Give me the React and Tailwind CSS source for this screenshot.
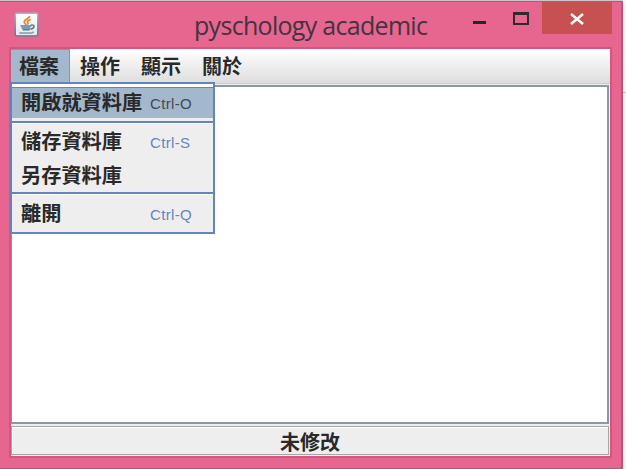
const cjk = "font-['Liberation_Sans','Noto_Sans_CJK_TC',sans-serif]";

function JavaIcon() {
  return (
    <svg className="ml-[14px] mt-[10px] h-[25px] w-[25px] shrink-0" viewBox="0 0 25 26" fill="none">
      <defs>
        <linearGradient id="tile" x1="0" y1="0" x2="0" y2="1">
          <stop offset="0" stopColor="#ffffff" />
          <stop offset="1" stopColor="#e3e9ec" />
        </linearGradient>
        <linearGradient id="rim" x1="0" y1="0" x2="0" y2="1">
          <stop offset="0" stopColor="#a9b5c4" />
          <stop offset="1" stopColor="#557a91" />
        </linearGradient>
      </defs>
      <rect x="0.8" y="1.2" width="23.4" height="23.6" rx="1.5" fill="url(#tile)" stroke="url(#rim)" strokeWidth="1.5" />
      <path d="M15.8 4.2C15.5 7 9.6 7.6 10.2 10.6c.2 1.2 1.5 1.8 1.8 2.8M16.8 7.8c-3.2 1-4 2-3 3.2.8 1 .1 1.7-.4 2.2" stroke="#ea8430" strokeWidth="1.8" />
      <path d="M6.3 14.6h11.2M7.4 16.6h9.2M8.4 18.5h7.5" stroke="#547f9b" strokeWidth="1.7" />
      <path d="M17 13.6c4.6-1 4.4 3.3-.4 4.3" stroke="#547f9b" strokeWidth="1.6" />
      <path d="M5 21.8h13l2-1" stroke="#7d9db1" strokeWidth="1.5" />
    </svg>
  );
}

function MenuItem({ label, shortcut, className = "", shortcutClass = "text-[#6684c5]" }) {
  return (
    <div className={`flex shrink-0 items-center pl-[9px] ${className}`}>
      <span className="w-[129px] whitespace-nowrap text-[20.2px] leading-none font-bold text-[#292929]">{label}</span>
      <span className={`text-[15px] leading-none font-normal tracking-[0.35px] ${shortcutClass}`}>{shortcut}</span>
    </div>
  );
}

function FileMenu() {
  return (
    <div className="absolute top-[33px] -left-px flex h-[152px] w-[205px] flex-col border-2 border-[#6484bf] bg-[#eeeeee]">
      <div className="h-[3px] shrink-0 bg-white" />
      <MenuItem label="開啟就資料庫" shortcut="Ctrl-O" className="h-[31px] border-t border-[#6484bf] bg-[#a3b8cc] pt-px" shortcutClass="text-[#424951]" />
      <div className="h-[3px] shrink-0 bg-[#eeeeee]" />
      <div className="h-[3px] shrink-0 border-t-2 border-[#6484bf] bg-white" />
      <MenuItem label="儲存資料庫" shortcut="Ctrl-S" className="h-[36px] pt-px" />
      <MenuItem label="另存資料庫" className="h-[32px]" />
      <div className="h-[3px] shrink-0 border-t-2 border-[#6484bf] bg-white" />
      <MenuItem label="離開" shortcut="Ctrl-Q" className="h-[37px] pt-px" />
    </div>
  );
}

export default function App() {
  return (
    <div className={`flex h-[469px] w-[626px] overflow-hidden bg-[#f5f5f5] ${cjk}`}>
      <div className="flex h-full w-[623px] shrink-0 flex-col border-t border-[#d0c3c9]">
        <div className="flex min-h-0 flex-1 flex-col border-t border-r-2 border-b border-[#bd5275] bg-[#e6668f]">
          <header className="flex h-[45px] shrink-0">
            <JavaIcon />
            <h1 className="mt-[5px] ml-[155px] w-[265px] shrink-0 whitespace-nowrap font-['Open_Sans','Noto_Sans',sans-serif] text-[25px] leading-[36px] font-normal tracking-[-0.7px] text-[#433341]">pyschology academic</h1>
            <div className="flex">
              <div className="mt-[19px] ml-[14px] h-[3px] w-[13px] bg-[#282528]" />
              <div className="mt-[10px] ml-[27px] h-[13px] w-[16px] border-2 border-t-[3px] border-[#302a2e]" />
              <div className="ml-[13px] flex h-[32px] w-[70px] items-center justify-center bg-[#c75050]">
                <svg className="mt-[2px] h-[12px] w-[14px]" viewBox="0 0 14 12" stroke="#ffffff" strokeWidth="2.5">
                  <path d="M1 1l12 10M13 1L1 11" />
                </svg>
              </div>
            </div>
          </header>
          <main className="ml-[9px] flex h-[411px] w-[603px] shrink-0 flex-col border-2 border-[#cf5780] bg-[#eeeeee]">
            <nav className="relative flex h-[35px] shrink-0 border-b border-[#cccccc] bg-linear-to-b from-white to-[#dedede] text-[20px] leading-none font-bold text-[#292929]">
              <div className="flex h-[33px] w-[59px] items-center border-t border-r border-[#8798a9] bg-[#a3b8cc] pt-px pl-[8px]">檔案</div>
              <div className="flex h-[34px] w-[61px] items-center pt-px pl-[10px]">操作</div>
              <div className="flex h-[34px] w-[61px] items-center pt-px pl-[10px]">顯示</div>
              <div className="flex h-[34px] items-center pt-px pl-[10px]">關於</div>
              <FileMenu />
            </nav>
            <section className="mt-px mr-px h-[339px] shrink-0 border-2 border-l border-[#8799aa] bg-white" />
            <footer className="mt-[2px] mr-px flex h-[29px] shrink-0 items-center justify-center border border-[#a5a5a5] bg-[#eeeeee] pt-[4px] text-[20px] leading-none font-bold text-[#292929] shadow-[inset_1px_1px_0_#ffffff]">未修改</footer>
          </main>
        </div>
      </div>
      <div className="mt-[92px] h-px flex-1 bg-[#bdbdbd]" />
    </div>
  );
}
